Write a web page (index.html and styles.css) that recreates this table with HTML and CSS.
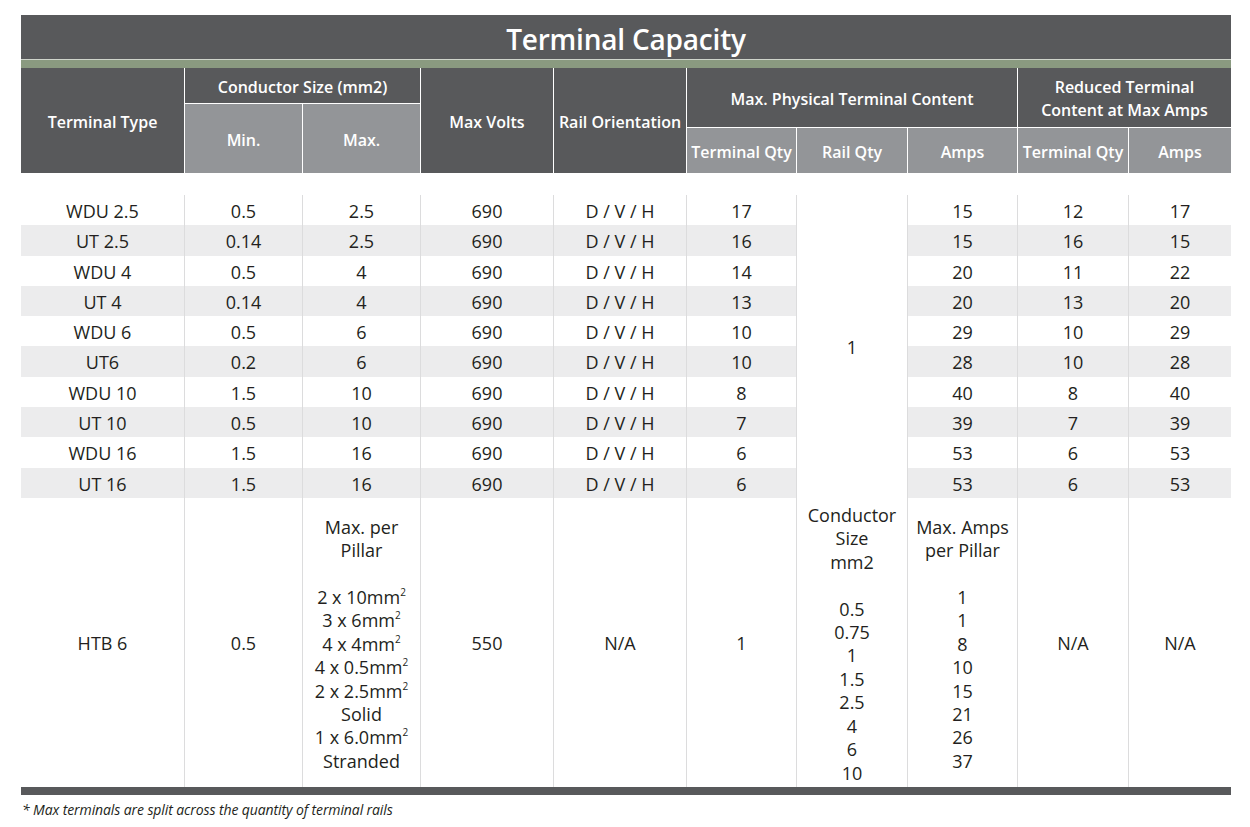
FILE: index.html
```html
<!DOCTYPE html>
<html lang="en">
<head>
<meta charset="utf-8">
<title>Terminal Capacity</title>
<link rel="stylesheet" href="styles.css">
</head>
<body>
<div class="sheet">
  <div class="title-bar"><h1 class="title">Terminal Capacity</h1></div>
  <div class="accent"></div>

  <table class="grid head">
    <colgroup>
      <col class="c1"><col class="c2"><col class="c3"><col class="c4"><col class="c5">
      <col class="c6"><col class="c7"><col class="c8"><col class="c9"><col class="c10">
    </colgroup>
    <tr class="ha">
      <th rowspan="3" class="dark">Terminal Type</th>
      <th colspan="2" class="dark sep">Conductor Size (mm2)</th>
      <th rowspan="3" class="dark sep">Max Volts</th>
      <th rowspan="3" class="dark sep">Rail Orientation</th>
      <th colspan="3" rowspan="2" class="dark sep">Max. Physical Terminal Content</th>
      <th colspan="2" rowspan="2" class="dark sep">Reduced Terminal<br>Content at Max Amps</th>
    </tr>
    <tr class="hb">
      <th rowspan="2" class="light sep top">Min.</th>
      <th rowspan="2" class="light sep top">Max.</th>
    </tr>
    <tr class="hc">
      <th class="light sep top">Terminal Qty</th>
      <th class="light sep top">Rail Qty</th>
      <th class="light sep top">Amps</th>
      <th class="light sep top">Terminal Qty</th>
      <th class="light sep top">Amps</th>
    </tr>
  </table>

  <table class="grid body">
    <colgroup>
      <col class="c1"><col class="c2"><col class="c3"><col class="c4"><col class="c5">
      <col class="c6"><col class="c7"><col class="c8"><col class="c9"><col class="c10">
    </colgroup>
    <tbody>
      <tr class="row"><td>WDU 2.5</td><td>0.5</td><td>2.5</td><td>690</td><td>D / V / H</td><td>17</td><td rowspan="10" class="merged">1</td><td>15</td><td>12</td><td>17</td></tr>
      <tr class="row"><td>UT 2.5</td><td>0.14</td><td>2.5</td><td>690</td><td>D / V / H</td><td>16</td><td>15</td><td>16</td><td>15</td></tr>
      <tr class="row"><td>WDU 4</td><td>0.5</td><td>4</td><td>690</td><td>D / V / H</td><td>14</td><td>20</td><td>11</td><td>22</td></tr>
      <tr class="row"><td>UT 4</td><td>0.14</td><td>4</td><td>690</td><td>D / V / H</td><td>13</td><td>20</td><td>13</td><td>20</td></tr>
      <tr class="row"><td>WDU 6</td><td>0.5</td><td>6</td><td>690</td><td>D / V / H</td><td>10</td><td>29</td><td>10</td><td>29</td></tr>
      <tr class="row"><td>UT6</td><td>0.2</td><td>6</td><td>690</td><td>D / V / H</td><td>10</td><td>28</td><td>10</td><td>28</td></tr>
      <tr class="row"><td>WDU 10</td><td>1.5</td><td>10</td><td>690</td><td>D / V / H</td><td>8</td><td>40</td><td>8</td><td>40</td></tr>
      <tr class="row"><td>UT 10</td><td>0.5</td><td>10</td><td>690</td><td>D / V / H</td><td>7</td><td>39</td><td>7</td><td>39</td></tr>
      <tr class="row"><td>WDU 16</td><td>1.5</td><td>16</td><td>690</td><td>D / V / H</td><td>6</td><td>53</td><td>6</td><td>53</td></tr>
      <tr class="row"><td>UT 16</td><td>1.5</td><td>16</td><td>690</td><td>D / V / H</td><td>6</td><td>53</td><td>6</td><td>53</td></tr>
      <tr class="htb">
        <td>HTB 6</td>
        <td>0.5</td>
        <td class="stack">Max. per<br>Pillar<br><br>2 x 10mm<sup>2</sup><br>3 x 6mm<sup>2</sup><br>4 x 4mm<sup>2</sup><br>4 x 0.5mm<sup>2</sup><br>2 x 2.5mm<sup>2</sup><br>Solid<br>1 x 6.0mm<sup>2</sup><br>Stranded</td>
        <td>550</td>
        <td>N/A</td>
        <td>1</td>
        <td class="stack">Conductor<br>Size<br>mm2<br><br>0.5<br>0.75<br>1<br>1.5<br>2.5<br>4<br>6<br>10</td>
        <td class="stack">Max. Amps<br>per Pillar<br><br>1<br>1<br>8<br>10<br>15<br>21<br>26<br>37</td>
        <td>N/A</td>
        <td>N/A</td>
      </tr>
    </tbody>
  </table>
  <div class="bottom-bar"></div>
  <p class="note">* Max terminals are split across the quantity of terminal rails</p>
</div>
</body>
</html>
```

FILE: styles.css
```css
html, body {
  margin: 0;
  padding: 0;
  background: #ffffff;
}

body {
  font-family: "Open Sans", "Noto Sans", "Liberation Sans", sans-serif;
  color: #231f20;
}

.sheet {
  width: 1210px;
  margin: 15px 0 0 21px;
}

.title-bar {
  height: 45px;
  box-sizing: border-box;
  padding-top: 4px;
  background: #58595b;
  border-bottom: 1px solid #cfd4cb;
  display: flex;
  align-items: center;
  justify-content: center;
}

.title {
  margin: 0;
  font-size: 28px;
  font-weight: 600;
  color: #ffffff;
  line-height: 1;
  letter-spacing: -0.2px;
}

.accent {
  height: 8px;
  background: #8a9a80;
}

.grid {
  width: 1210px;
  table-layout: fixed;
  border-collapse: separate;
  border-spacing: 0;
}

.c1 { width: 163px; }
.c2 { width: 118px; }
.c3 { width: 118px; }
.c4 { width: 133px; }
.c5 { width: 133px; }
.c6 { width: 110px; }
.c7 { width: 111px; }
.c8 { width: 110px; }
.c9 { width: 111px; }
.c10 { width: 103px; }

.head th {
  color: #ffffff;
  font-size: 16px;
  font-weight: 600;
  line-height: 23px;
  padding: 3px 1px 0;
  text-align: center;
  vertical-align: middle;
  white-space: nowrap;
}

.head .ha { height: 35px; }
.head .hb { height: 24px; }
.head .hc { height: 46px; }

.dark { background: #58595b; }
.light { background: #939598; }
.sep { border-left: 1px solid #ffffff; }
.top { border-top: 1px solid #ffffff; }

.body {
  margin-top: 22px;
}

.body td {
  font-size: 18px;
  line-height: 23.4px;
  text-align: center;
  vertical-align: middle;
  padding: 3px 0 0;
  white-space: nowrap;
}

.body td + td {
  border-left: 1px solid #dcdcdd;
}

.body .row { height: 30.3px; }

.body .row:nth-child(even) td {
  background: #ececed;
}

.body .merged {
  background: #ffffff;
}

.body .htb { height: 289px; }

.body .htb .stack {
  padding-top: 4px;
}

sup {
  font-size: 10px;
  line-height: 0;
  vertical-align: 8px;
}

.bottom-bar {
  height: 8px;
  background: #58595b;
}

.note {
  margin: 5px 0 0 1px;
  font-size: 14px;
  font-style: italic;
  line-height: 19px;
  color: #231f20;
  letter-spacing: -0.1px;
}
```
